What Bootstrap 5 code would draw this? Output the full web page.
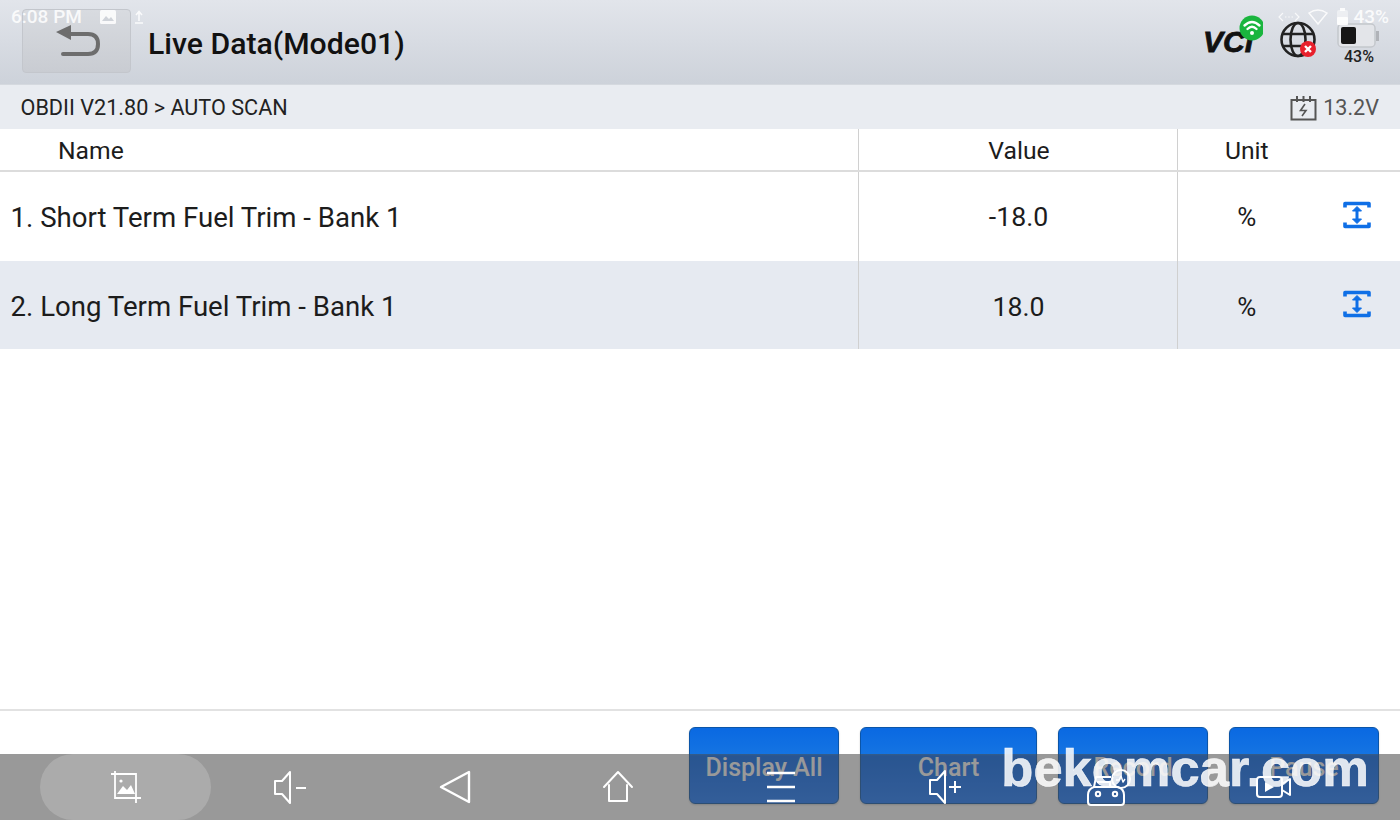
<!DOCTYPE html>
<html lang="en">
<head>
    <meta charset="UTF-8">
    <meta name="viewport" content="width=device-width, initial-scale=1.0">
    <title>Live Data(Mode01)</title>
    <!-- Bootstrap CSS -->
    <link href="https://cdn.jsdelivr.net/npm/bootstrap@5.3.0/dist/css/bootstrap.min.css" rel="stylesheet">

    <style>
        html, body {
            height: 820px;
            overflow: hidden;
        }
        body {
            font-family: Roboto, "Liberation Sans", sans-serif;
            color: #1c1c1c;
            background-color: #fff;
            position: relative;
        }
        .screen {
            height: 820px;
        }
        /* top bar */
        .title-bar {
            height: 85px;
            padding: 0 19px 0 22px;
            background: linear-gradient(#e2e5eb, #cdd2da);
            border-bottom: 1px solid #d5d9df;
        }
        .back-btn {
            width: 109px;
            height: 64px;
            margin-top: 9px;
            padding: 0;
            background: linear-gradient(#d8dbe0, #c9ccd2);
            border: 1px solid #c3c6cc;
            border-radius: 4px;
        }
        .page-title {
            font-size: 30.2px;
            font-weight: 500;
            margin: 5px 0 0 17px;
            color: #111;
            line-height: 1;
        }
        .right-icons {
            margin-top: 10px;
            gap: 16px;
        }
        .net-icon { margin-top: 9px; }
        .batt-box { margin-top: 13px; }
        .batt-label {
            font-size: 16px;
            font-weight: 500;
            line-height: 1;
            color: #222;
            text-align: center;
        }
        /* crumb bar */
        .crumb-bar {
            height: 44px;
            padding: 3px 21px 0 20.5px;
            background-color: #e9ecf1;
            font-size: 21.65px;
            color: #222;
        }
        .volt-text {
            color: #555;
            font-size: 21.6px;
            gap: 6px;
        }
        /* data table */
        .data-table {
            table-layout: fixed;
            width: 1400px;
            margin: 0;
            font-size: 24.7px;
            --bs-table-bg: transparent;
            color: #1c1c1c;
        }
        .data-table th, .data-table td {
            padding: 0;
            border: 0;
            vertical-align: middle;
            font-weight: 400;
        }
        .data-table th {
            height: 42px;
            padding-top: 3px;
            border-bottom: 2px solid #dcdcdc;
        }
        .data-table .cell-v {
            border-left: 1px solid #d0d0d0;
        }
        .row-a td { height: 90px; }
        .row-b td { height: 88px; background-color: #e6eaf1; }
        .data-table th.val-head { padding-left: 3px; }
        .data-table .name-head { padding-left: 58px; }
        .data-table .name-cell { padding: 2px 0 0 10.5px; font-size: 27.6px; }
        .data-table .num-cell { padding: 2px 0 0 2px; font-size: 26.7px; }
        .data-table .unit-cell { font-size: 26px; padding-top: 2px; }
        .data-table .row-b .name-cell, .data-table .row-b .num-cell, .data-table .row-b .unit-cell { padding-top: 4px; }
        .data-table .ico-cell { padding: 0 3px 3px 0; }
        /* bottom buttons */
        .foot-bar {
            height: 111px;
            border-top: 2px solid #e2e2e2;
            padding: 16px 21px 0 0;
            gap: 21px;
        }
        .act-btn {
            width: 150px;
            height: 77px;
            padding: 4px 0 0;
            font-size: 25px;
            font-weight: 500;
            line-height: 38px;
            color: #fff;
            background: linear-gradient(#0a69e2, #1574e2 36%, #0064eb 37%, #1878ff);
            border: 1px solid #0b55a8;
            border-radius: 6px;
            box-shadow: 0 1px 2px rgba(0, 0, 0, .2);
        }
        .act-btn.wide { width: 177px; }
        /* android overlays */
        .status-row {
            position: absolute;
            top: 5px;
            left: 11px;
            right: 11px;
            height: 24px;
            color: rgba(255, 255, 255, .85);
            font-size: 19px;
            font-weight: 500;
        }
        .status-img { margin-left: 18px; }
        .status-up { margin-left: 18px; }
        .sys-nav {
            position: absolute;
            left: 0;
            right: 0;
            bottom: 0;
            height: 66px;
            padding-left: 44px;
            background-color: rgba(73, 73, 73, .56);
        }
        .sys-item {
            width: 163.7px;
        }
        .sys-item svg {
            position: relative;
            z-index: 2;
            overflow: visible;
        }
        .sys-pill {
            position: absolute;
            left: 40px;
            top: 0;
            width: 171px;
            height: 66px;
            border-radius: 33px;
            background-color: rgba(255, 255, 255, .18);
        }
        /* a marca d'agua fica sobre a barra, os icones sobre ela */
        .wm-text {
            position: absolute;
            z-index: 1;
            right: 31px;
            top: 733px;
            font-family: "Liberation Sans", sans-serif;
            font-size: 52.5px;
            font-weight: 700;
            line-height: 70px;
            color: rgba(255, 255, 255, .85);
            -webkit-text-stroke: .6px rgba(255, 255, 255, .85);
        }
    </style>
</head>
<body>

<div class="screen d-flex flex-column">
    <!-- barra do titulo -->
    <div class="title-bar d-flex align-items-start">
        <button type="button" class="btn back-btn d-flex align-items-center justify-content-center">
            <svg width="46" height="36" viewBox="0 0 46 36" fill="none">
                <path d="M2 9 L17 2 V17 Z" fill="#6d6d6d"/>
                <path d="M15 11 H34 Q44 11 44 21 Q44 31 34 31 H9" stroke="#6d6d6d" stroke-width="4" stroke-linecap="round"/>
            </svg>
        </button>
        <h1 class="page-title align-self-center">Live Data(Mode01)</h1>
        <div class="ms-auto d-flex align-items-start right-icons">
            <svg width="60" height="48" viewBox="0 0 60 48">
                <text x="0" y="42" font-family="Liberation Sans, sans-serif" font-size="29" font-weight="700" font-style="italic" fill="#111" stroke="#111" stroke-width=".8" textLength="50" lengthAdjust="spacingAndGlyphs">VCI</text>
                <circle cx="49" cy="18" r="12.5" fill="#1ab53e"/>
                <path d="M41.5 15.5 Q49 8.5 56.5 15.5 M44.5 19 Q49 14.5 53.5 19" stroke="#fff" stroke-width="2.4" fill="none" stroke-linecap="round"/>
                <circle cx="49" cy="23" r="2" fill="#fff"/>
            </svg>
            <svg width="42" height="40" viewBox="0 0 42 40" class="net-icon">
                <g fill="none" stroke="#222" stroke-width="2.6">
                    <circle cx="19" cy="20.5" r="16.5"/>
                    <ellipse cx="19" cy="20.5" rx="7.5" ry="16.5"/>
                    <path d="M3 15 H35 M3 27 H35"/>
                </g>
                <circle cx="29" cy="30" r="8" fill="#e8202c"/>
                <path d="M26 27 L32 33 M32 27 L26 33" stroke="#fff" stroke-width="2.4"/>
            </svg>
            <div class="batt-box">
                <svg class="d-block" width="44" height="26" viewBox="0 0 44 26">
                    <rect x="1" y="1" width="37" height="23" rx="4" fill="#e3e5e9" stroke="#c4c7cc" stroke-width="1.5"/>
                    <rect x="4" y="4" width="15" height="17" rx="2" fill="#161616"/>
                    <rect x="39" y="8" width="3" height="10" fill="#b0b3b8"/>
                </svg>
                <div class="batt-label">43%</div>
            </div>
        </div>
    </div>

    <!-- caminho -->
    <div class="crumb-bar d-flex align-items-center justify-content-between">
        <span>OBDII V21.80 &gt; AUTO SCAN</span>
        <span class="volt-text d-flex align-items-center">
            <svg width="27" height="26" viewBox="0 0 27 26" fill="none" stroke="#555" stroke-width="2">
                <rect x="1.5" y="5" width="24" height="19.5"/>
                <path d="M7 1 V7 M13.5 1 V7 M20 1 V7"/>
                <path d="M15 9 L10.5 15.5 H16 L12 21" stroke-width="1.6"/>
            </svg>
            13.2V
        </span>
    </div>

    <!-- tabela -->
    <div class="flex-grow-1">
        <table class="table data-table">
            <colgroup>
                <col style="width: 858px">
                <col style="width: 319px">
                <col style="width: 139px">
                <col>
            </colgroup>
            <thead>
                <tr>
                    <th class="name-head">Name</th>
                    <th class="cell-v val-head text-center">Value</th>
                    <th class="cell-v text-center">Unit</th>
                    <th></th>
                </tr>
            </thead>
            <tbody>
                <tr class="row-a">
                    <td class="name-cell">1. Short Term Fuel Trim - Bank 1</td>
                    <td class="cell-v num-cell text-center">-18.0</td>
                    <td class="cell-v unit-cell text-center">%</td>
                    <td class="ico-cell">
                        <svg class="d-block mx-auto" width="28" height="28" viewBox="0 0 28 28" fill="none" stroke="#0f6fe6" stroke-width="3.6" stroke-linejoin="round">
                            <path d="M2 6.5 V2.5 H26 V6.5 M2 21.5 V25.5 H26 V21.5"/>
                            <path d="M14 8 V20" stroke-width="3"/>
                            <path d="M9.5 10 L14 5.5 L18.5 10 Z M9.5 18 L14 22.5 L18.5 18 Z" fill="#0f6fe6" stroke-width="1"/>
                        </svg>
                    </td>
                </tr>
                <tr class="row-b">
                    <td class="name-cell">2. Long Term Fuel Trim - Bank 1</td>
                    <td class="cell-v num-cell text-center">18.0</td>
                    <td class="cell-v unit-cell text-center">%</td>
                    <td class="ico-cell">
                        <svg class="d-block mx-auto" width="28" height="28" viewBox="0 0 28 28" fill="none" stroke="#0f6fe6" stroke-width="3.6" stroke-linejoin="round">
                            <path d="M2 6.5 V2.5 H26 V6.5 M2 21.5 V25.5 H26 V21.5"/>
                            <path d="M14 8 V20" stroke-width="3"/>
                            <path d="M9.5 10 L14 5.5 L18.5 10 Z M9.5 18 L14 22.5 L18.5 18 Z" fill="#0f6fe6" stroke-width="1"/>
                        </svg>
                    </td>
                </tr>
            </tbody>
        </table>
    </div>

    <!-- botoes -->
    <div class="foot-bar d-flex justify-content-end align-items-start">
        <button type="button" class="btn act-btn">Display All</button>
        <button type="button" class="btn act-btn wide">Chart</button>
        <button type="button" class="btn act-btn">Record</button>
        <button type="button" class="btn act-btn">Pause</button>
    </div>
</div>

<!-- barra de status por cima -->
<div class="status-row d-flex align-items-center">
    <span>6:08 PM</span>
    <svg class="status-img" width="16" height="14" viewBox="0 0 16 14">
        <rect x="0" y="0" width="16" height="14" rx="1.5" fill="#fff" opacity=".85"/>
        <path d="M2 11 L6 6 L9 9 L11 7 L14 11 Z" fill="#cfd3d9"/>
    </svg>
    <svg class="status-up" width="10" height="14" viewBox="0 0 10 14" fill="none" stroke="#fff" stroke-width="1.6" opacity=".85">
        <path d="M5 11 V2 M2 5 L5 1.5 L8 5 M1 13 H9"/>
    </svg>
    <svg class="ms-auto" width="22" height="14" viewBox="0 0 22 14" fill="none" stroke="#fff" stroke-width="1.2" opacity=".8">
        <path d="M5 3 L1 7 L5 11 M17 3 L21 7 L17 11"/>
        <path d="M7 7 H8.5 M10.2 7 H11.8 M13.5 7 H15"/>
    </svg>
    <svg class="ms-2" width="20" height="16" viewBox="0 0 20 16" fill="none" stroke="#fff" stroke-width="1.5" opacity=".85">
        <path d="M1 4 Q10 -2 19 4 L10 15 Z"/>
    </svg>
    <svg class="ms-2" width="13" height="18" viewBox="0 0 13 18">
        <rect x="4" y="0" width="5" height="3" fill="#fff" opacity=".85"/>
        <rect x="1" y="2" width="11" height="15" rx="2" fill="#fff" opacity=".45"/>
        <rect x="1" y="9" width="11" height="8" rx="1" fill="#fff" opacity=".85"/>
    </svg>
    <span class="ms-1">43%</span>
</div>

<!-- barra de navegacao por cima -->
<div class="sys-nav d-flex">
    <div class="sys-pill"></div>
    <div class="sys-item d-flex align-items-center justify-content-center">
        <svg width="32" height="34" viewBox="0 0 32 34" fill="none" stroke="#fff" stroke-width="1.8">
            <path d="M1 4 H26 V33 M5 1 V28 H31"/>
            <circle cx="11" cy="11" r="1.6" fill="#fff" stroke="none"/>
            <path d="M7 24 L13 16 L17 20 L21 15 L25 24 Z" fill="#fff" stroke="none"/>
        </svg>
    </div>
    <div class="sys-item d-flex align-items-center justify-content-center">
        <svg width="34" height="34" viewBox="0 0 34 34" fill="none" stroke="#fff" stroke-width="2" stroke-linejoin="round">
            <path d="M17 2 L9 11 H2 V24 H9 L17 33 Z"/>
            <path d="M23 18 H33"/>
        </svg>
    </div>
    <div class="sys-item d-flex align-items-center justify-content-center">
        <svg width="32" height="34" viewBox="-2 0 32 34" fill="none" stroke="#fff" stroke-width="2.4" stroke-linejoin="round">
            <path d="M30 2 V32 L2 17 Z"/>
        </svg>
    </div>
    <div class="sys-item d-flex align-items-center justify-content-center">
        <svg width="32" height="34" viewBox="-1 0 32 34" fill="none" stroke="#fff" stroke-width="2" stroke-linejoin="round" stroke-linecap="round">
            <path d="M2 17 L16 2 L30 17 M7 15 V31 H25 V15"/>
        </svg>
    </div>
    <div class="sys-item d-flex align-items-center justify-content-center">
        <svg width="32" height="34" viewBox="0 0 32 34" fill="none" stroke="#fff" stroke-width="2.6">
            <path d="M2 3 H30 M2 17 H30 M2 31 H30"/>
        </svg>
    </div>
    <div class="sys-item d-flex align-items-center justify-content-center">
        <svg width="34" height="36" viewBox="-2 0 34 36" fill="none" stroke="#fff" stroke-width="2" stroke-linejoin="round">
            <path d="M16 2 L8 11 H1 V25 H8 L16 34 Z"/>
            <path d="M20 18 H32 M26 12 V24"/>
        </svg>
    </div>
    <div class="sys-item d-flex align-items-center justify-content-center">
        <svg width="46" height="38" viewBox="0 0 46 38" fill="none" stroke="#fff" stroke-width="2" stroke-linejoin="round">
            <path d="M9 19 Q3 21 3 27 V34 Q3 37 6 37 H36 Q39 37 39 34 V27 Q39 21 33 19 H9 Z"/>
            <path d="M9 19 L11 9 H26 M12 14 H25 V19"/>
            <circle cx="13" cy="26" r="2.2"/>
            <circle cx="30" cy="26" r="2.2"/>
            <circle cx="36" cy="11" r="9"/>
            <path d="M31 12 H34 L36 8 L38 14 L40 11" stroke-width="1.4"/>
        </svg>
    </div>
    <div class="sys-item d-flex align-items-center justify-content-center">
        <svg width="40" height="22" viewBox="0 0 40 22" fill="none" stroke="#fff" stroke-width="2" stroke-linejoin="round">
            <rect x="5" y="1" width="25" height="20" rx="3"/>
            <path d="M30 8 L38 3 V19 L30 14"/>
            <path d="M13 6 L22 11 L13 16 Z" fill="#fff" stroke="none"/>
        </svg>
    </div>
</div>

<div class="wm-text">bekomcar.com</div>

<!-- Bootstrap JS -->
<script src="https://cdn.jsdelivr.net/npm/bootstrap@5.3.0/dist/js/bootstrap.bundle.min.js"></script>
</body>
</html>
